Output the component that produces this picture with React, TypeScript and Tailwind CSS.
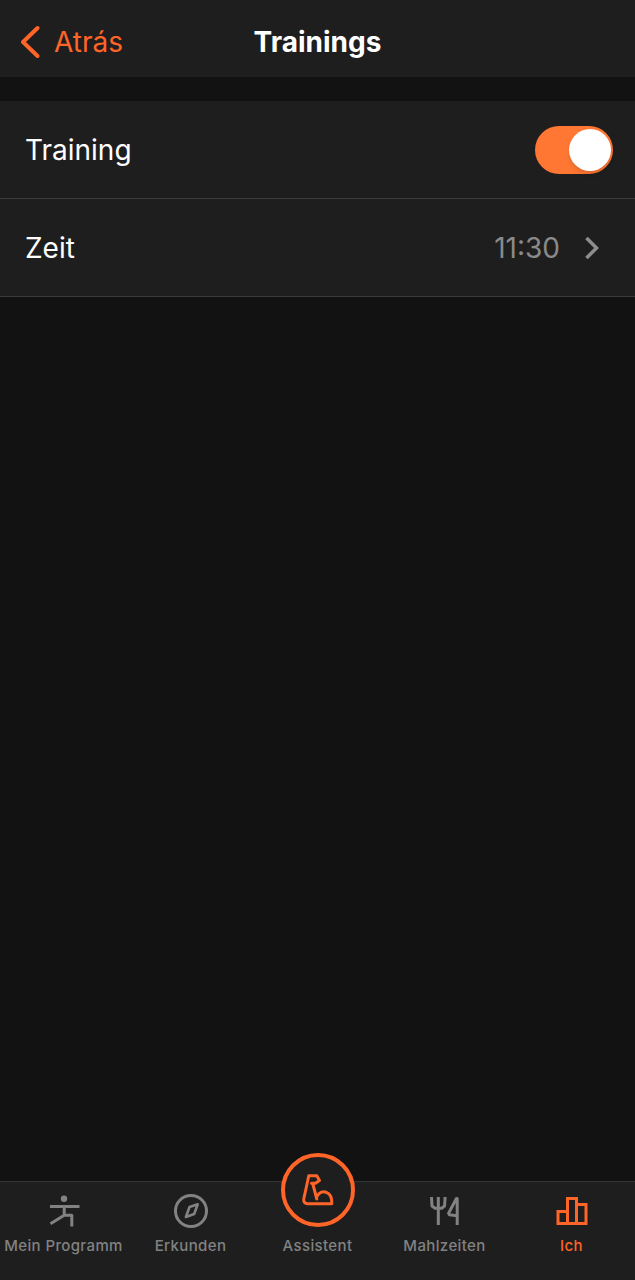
import { useState, type ReactNode } from "react";

function RunnerIcon() {
  return (
    <svg viewBox="0 0 36 36" className="size-9" fill="none" stroke="currentColor" strokeWidth="3" aria-hidden="true">
      <circle cx="18" cy="5.7" r="3.2" fill="currentColor" stroke="none" />
      <path d="M4 13.5h29.5M18.2 13.5v8.8M4.5 30.8l13.7-8.5h7.6v11.2" strokeLinejoin="round" />
    </svg>
  );
}

function CompassIcon() {
  return (
    <svg viewBox="0 0 36 36" className="size-9" fill="none" stroke="currentColor" strokeWidth="3" aria-hidden="true">
      <circle cx="18" cy="18" r="15.5" />
      <path d="M24.7 11.3l-8.2 2.7-3.6 10 8.3-3z" strokeWidth="2.6" strokeLinejoin="round" />
    </svg>
  );
}

function MealIcon() {
  return (
    <svg viewBox="0 0 36 36" className="size-9" fill="none" stroke="currentColor" strokeWidth="3" strokeLinejoin="round" aria-hidden="true">
      <path d="M4.5 4l.5 9 3 2.3h6.6l3-2.3.5-9M11.3 4v28" />
      <path d="M30.2 32V5.5h-.8L21.6 20.3l.8 1.5 7.8 1" />
    </svg>
  );
}

function ChartIcon() {
  return (
    <svg viewBox="0 0 36 36" className="size-9" fill="none" stroke="currentColor" strokeWidth="3" aria-hidden="true">
      <path d="M4 18.5h9.5v12H4zM13.5 5.5h9v25h-9zM22.5 11.5h9.5v19h-9.5z" />
    </svg>
  );
}

function ArmIcon() {
  return (
    <svg
      viewBox="0 0 36 36"
      className="size-9"
      fill="none"
      stroke="currentColor"
      strokeWidth="3"
      strokeLinejoin="round"
      strokeLinecap="round"
      aria-hidden="true"
    >
      <path d="M11.5 11.3H15.5L19.5 8.5 16.8 3.7H8.8L3.8 26.8C3.2 29.5 4.8 31.7 7.5 31.7H31.8C32.5 19 21.5 16.5 17.2 24" />
      <path d="M13 12.5L16.8 27" />
    </svg>
  );
}

type Tab = { label: string; icon: ReactNode; active?: boolean; raised?: boolean };

const tabs: Tab[] = [
  { label: "Mein Programm", icon: <RunnerIcon /> },
  { label: "Erkunden", icon: <CompassIcon /> },
  { label: "Assistent", icon: <ArmIcon />, raised: true },
  { label: "Mahlzeiten", icon: <MealIcon /> },
  { label: "Ich", icon: <ChartIcon />, active: true },
];

function TabBar() {
  return (
    <nav className="grid grid-cols-5 border-t border-[#343434] bg-[#1e1e1e]">
      {tabs.map((tab) => (
        <a
          key={tab.label}
          href="#"
          aria-current={tab.active ? "page" : undefined}
          className={`relative flex flex-col items-center pt-[11px] pb-6 ${tab.active ? "text-[#ff6428]" : "text-[#828282]"}`}
        >
          {tab.raised ? (
            <>
              <span className="absolute -top-[29px] flex size-[74px] items-center justify-center rounded-full border-4 border-[#ff6428] bg-[#1e1e1e] text-[#ff6428]">
                {tab.icon}
              </span>
              <span className="size-9" />
            </>
          ) : (
            tab.icon
          )}
          <span className="mt-[7px] text-[15px] leading-5 font-medium tracking-wide whitespace-nowrap">{tab.label}</span>
        </a>
      ))}
    </nav>
  );
}

export default function App() {
  const [enabled, setEnabled] = useState(true);

  return (
    <div className="flex min-h-screen flex-col bg-[#121212] font-['Inter',sans-serif] text-[28px] leading-9 text-white">
      <header className="grid grid-cols-[1fr_auto_1fr] items-center bg-[#1e1e1e] px-5 pt-6 pb-[17px]">
        <button type="button" className="flex items-center gap-3.5 justify-self-start text-[#ff6428]">
          <svg viewBox="0 0 20 34" className="h-[34px] w-5" fill="none" stroke="currentColor" strokeWidth="4" strokeLinecap="round" strokeLinejoin="round" aria-hidden="true">
            <path d="M17.5 3L3 17l14.5 14" />
          </svg>
          Atrás
        </button>
        <h1 className="font-bold">Trainings</h1>
      </header>

      <main className="mt-6 flex-1">
        <div className="flex h-[98px] items-center justify-between border-b border-[#3a3a3a] bg-[#1e1e1e] pr-[22px] pl-[25px]">
          <label htmlFor="training">Training</label>
          <input
            id="training"
            type="checkbox"
            role="switch"
            checked={enabled}
            onChange={(e) => setEnabled(e.target.checked)}
            className="h-12 w-[78px] appearance-none rounded-full bg-[#4a4a4a] p-[3px] before:block before:size-[42px] before:rounded-full before:bg-white before:shadow-md checked:bg-[#ff7733] checked:before:translate-x-[31px]"
          />
        </div>
        <button type="button" className="flex h-[98px] w-full items-center border-b border-[#3a3a3a] bg-[#1e1e1e] pr-[35px] pl-[25px]">
          <span>Zeit</span>
          <span className="ml-auto text-[#8a8a8a]">11:30</span>
          <svg viewBox="0 0 16 24" className="ml-6 h-6 w-4 text-[#8e8e8e]" fill="none" stroke="currentColor" strokeWidth="3.5" aria-hidden="true">
            <path d="M2.5 2l10 10-10 10" />
          </svg>
        </button>
      </main>

      <TabBar />
    </div>
  );
}
